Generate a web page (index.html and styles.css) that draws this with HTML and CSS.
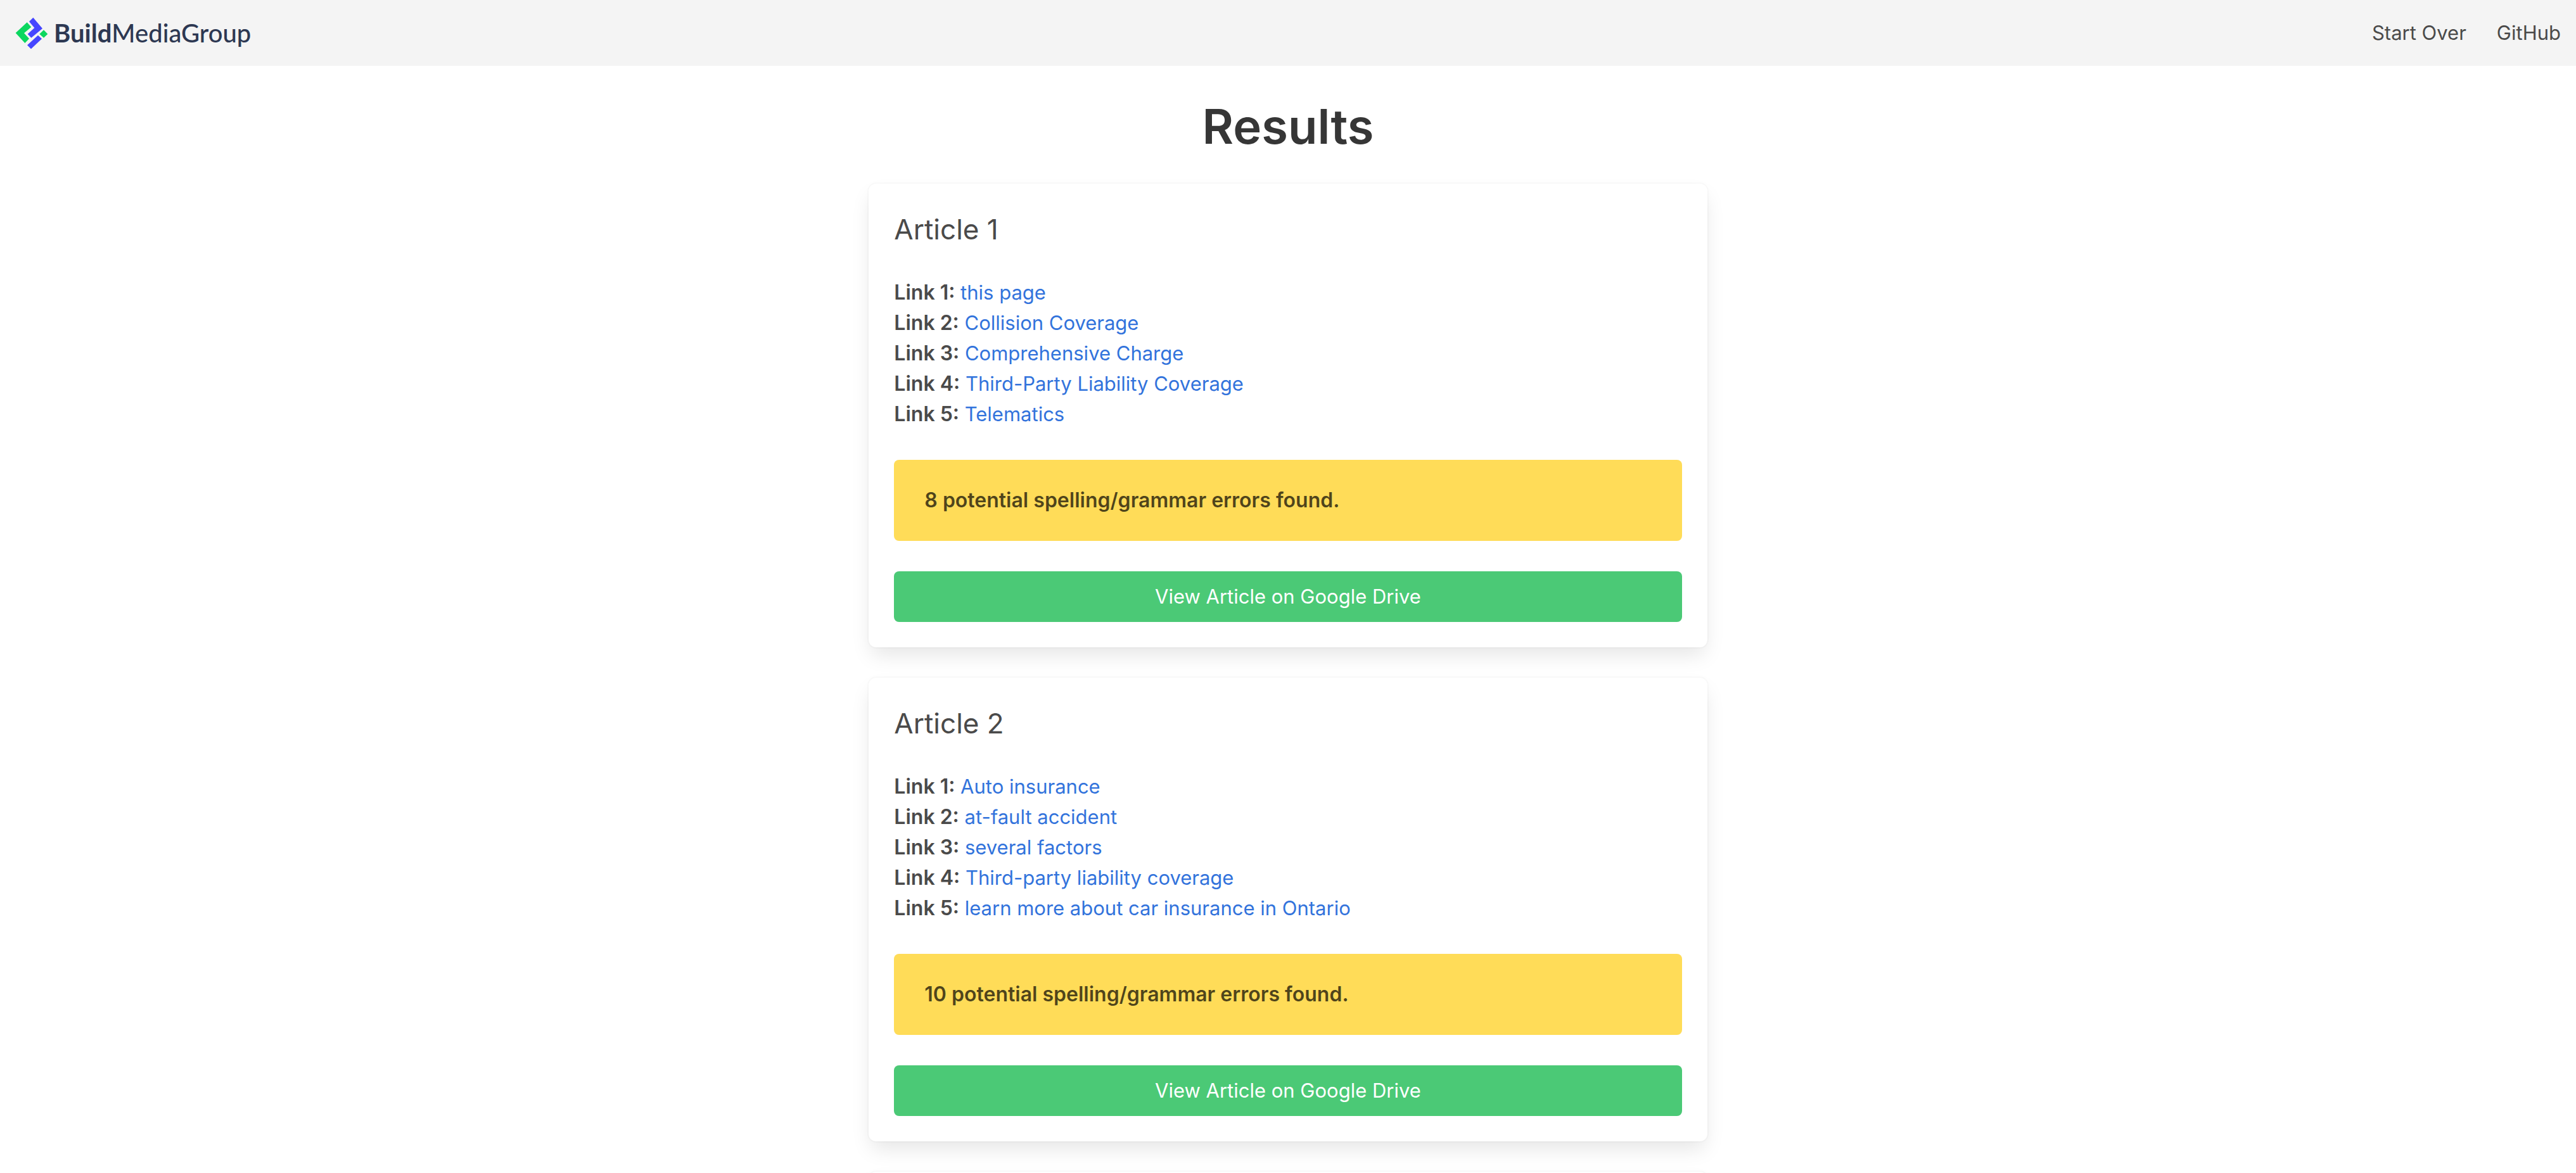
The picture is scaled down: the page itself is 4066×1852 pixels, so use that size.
FILE: index.html
```
<!DOCTYPE html>
<html lang="en">
<head>
<meta charset="utf-8">
<meta name="viewport" content="width=device-width, initial-scale=1">
<title>Results</title>
<link rel="stylesheet" href="styles.css">
</head>
<body>
<nav class="navbar">
  <a class="brand" href="#">
    <svg class="brand-mark" viewBox="12 12 156 156" aria-hidden="true">
      <path fill="#0bd75f" d="M14 90 68 40l20 22-34 29 24 26-20 21zM147 76l19 19-19 18-20-18z"/>
      <path fill="#4646ff" d="M97 17l44 52-53 44-17-18 32-29-25-30zM120 101l18 17-51 48-18-18z"/>
    </svg>
    <span class="brand-name"><b>Build</b>MediaGroup</span>
  </a>
  <div class="navbar-links">
    <a href="#">Start Over</a>
    <a href="#">GitHub</a>
  </div>
</nav>
<main class="section">
  <h1 class="title">Results</h1>
  <div class="results">
    <article class="box">
      <h2 class="subtitle">Article 1</h2>
      <ul class="links">
        <li><strong>Link 1:</strong> <a href="#">this page</a></li>
        <li><strong>Link 2:</strong> <a href="#">Collision Coverage</a></li>
        <li><strong>Link 3:</strong> <a href="#">Comprehensive Charge</a></li>
        <li><strong>Link 4:</strong> <a href="#">Third-Party Liability Coverage</a></li>
        <li><strong>Link 5:</strong> <a href="#">Telematics</a></li>
      </ul>
      <div class="notification"><strong>8 potential spelling/grammar errors found.</strong></div>
      <a class="button" href="#">View Article on Google Drive</a>
    </article>
    <article class="box">
      <h2 class="subtitle">Article 2</h2>
      <ul class="links">
        <li><strong>Link 1:</strong> <a href="#">Auto insurance</a></li>
        <li><strong>Link 2:</strong> <a href="#">at-fault accident</a></li>
        <li><strong>Link 3:</strong> <a href="#">several factors</a></li>
        <li><strong>Link 4:</strong> <a href="#">Third-party liability coverage</a></li>
        <li><strong>Link 5:</strong> <a href="#">learn more about car insurance in Ontario</a></li>
      </ul>
      <div class="notification"><strong>10 potential spelling/grammar errors found.</strong></div>
      <a class="button" href="#">View Article on Google Drive</a>
    </article>
    <article class="box"></article>
  </div>
</main>
</body>
</html>
```
FILE: styles.css
```
*,
*::before,
*::after {
  box-sizing: border-box;
}

body {
  margin: 0;
  background: #fff;
  color: #4a4a4a;
  font-family: Inter, "Liberation Sans", sans-serif;
  font-size: 31px;
  line-height: 48px;
}

a {
  color: #3273dc;
  text-decoration: none;
}

strong {
  font-size: 32px;
  font-weight: 600;
}

.navbar {
  display: flex;
  align-items: center;
  justify-content: space-between;
  min-height: 104px;
  padding: 0 24px;
  background: #f4f4f4;
}

.brand {
  display: flex;
  align-items: center;
  gap: 9px;
  color: #2d3852;
}

.brand-mark {
  width: 52px;
  height: 52px;
}

.brand-name {
  font-family: Lato, sans-serif;
  font-size: 40px;
  font-weight: 500;
}

.brand-name b {
  font-weight: 700;
}

.navbar-links {
  display: flex;
  gap: 48px;
}

.navbar-links a {
  color: #4a4a4a;
}

.section {
  padding: 48px;
}

.title {
  margin: 0 0 44px;
  color: #363636;
  font-size: 76px;
  font-weight: 600;
  line-height: 94px;
  text-align: center;
}

.results {
  display: grid;
  gap: 48px;
  width: calc(100% / 3);
  margin: 0 auto;
}

.box {
  padding: 40px;
  border-radius: 12px;
  background: #fff;
  box-shadow: 0 16px 32px -4px rgba(10, 10, 10, 0.1), 0 0 0 2px rgba(10, 10, 10, 0.02);
}

.subtitle {
  margin: 0 0 44px;
  font-size: 44px;
  font-weight: 400;
  line-height: 64px;
}

.links {
  margin: 0 0 48px;
  padding: 0;
  list-style: none;
}

.links li {
  height: 48px;
}

.notification {
  margin-bottom: 48px;
  padding: 40px 48px;
  border-radius: 8px;
  background: #ffdc58;
  color: rgba(0, 0, 0, 0.7);
}

.button {
  display: block;
  padding: 16px 32px;
  border-radius: 8px;
  background: #4bc976;
  color: #fff;
  text-align: center;
}
```
